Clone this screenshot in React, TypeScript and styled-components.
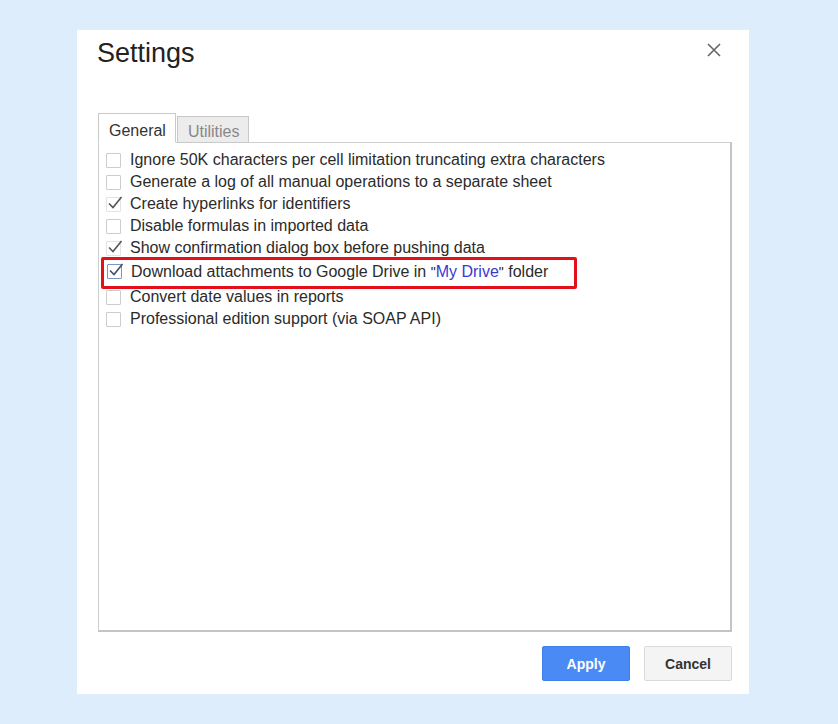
import React from "react";
import styled, { createGlobalStyle } from "styled-components";

const Global = createGlobalStyle`
  html, body { margin: 0; padding: 0; }
  body {
    background: #deedfb;
    font-family: "Liberation Sans", Arial, sans-serif;
    width: 838px;
    height: 724px;
    overflow: hidden;
  }
`;

const Page = styled.div`
  width: 838px;
  height: 724px;
  box-sizing: border-box;
  padding: 30px 89px 0 77px;
`;

const Dialog = styled.div`
  background: #ffffff;
  height: 664px;
  box-sizing: border-box;
  padding: 0 17px 0 21px;
  display: flex;
  flex-direction: column;
`;

const Header = styled.div`
  display: flex;
  justify-content: space-between;
  align-items: flex-start;
  height: 83px;
`;

const Title = styled.h1`
  margin: 8px 0 0 -1px;
  font-family: "Liberation Sans", Arial, sans-serif;
  font-weight: 400;
  font-size: 27px;
  line-height: 30px;
  color: #222;
`;

const Close = styled.button`
  border: 0;
  background: none;
  padding: 0;
  margin: 12px 10px 0 0;
  width: 16px;
  height: 16px;
  cursor: pointer;
  display: flex;
`;

const Tabs = styled.div`
  display: flex;
  align-items: flex-end;
  height: 30px;
  position: relative;
  z-index: 1;
`;

const Tab = styled.div<{ $active?: boolean }>`
  box-sizing: border-box;
  height: ${(p) => (p.$active ? "30px" : "27px")};
  padding: 0 9px 0 10px;
  border: 1px solid #c9c9c9;
  border-bottom: ${(p) => (p.$active ? "1px solid #ffffff" : "1px solid #c9c9c9")};
  background: ${(p) => (p.$active ? "#ffffff" : "#ececec")};
  color: ${(p) => (p.$active ? "#333" : "#888")};
  font-size: 16px;
  line-height: ${(p) => (p.$active ? "34px" : "29px")};
  margin-left: ${(p) => (p.$active ? "0" : "1px")};
`;

const Panel = styled.div`
  margin-top: -1px;
  height: 490px;
  box-sizing: border-box;
  border: 1px solid #cfcfcf;
  border-right: 2px solid #c4c4c4;
  border-bottom: 2px solid #c4c4c4;
  padding: 6px 0 0 7px;
  display: flex;
  flex-direction: column;
`;

const Row = styled.label<{ $highlight?: boolean }>`
  display: flex;
  align-items: center;
  gap: 9px;
  height: 22px;
  font-size: 16px;
  color: #2b2b2b;
  ${(p) =>
    p.$highlight
      ? `
    box-sizing: border-box;
    align-self: flex-start;
    height: 32px;
    margin: -2px 0 -3px -5px;
    padding: 0 26px 3px 3px;
    border: 3px solid #e3101b;
    border-radius: 2px;
    position: relative;
    z-index: 1;
    background: #fff;
  `
      : ""}
`;

const Box = styled.span<{ $checked?: boolean; $blue?: boolean }>`
  width: 15px;
  height: 15px;
  box-sizing: border-box;
  border: 1px solid ${(p) => (p.$blue ? "#7c95c4" : p.$checked ? "#e3e3e3" : "#cdcdcd")};
  border-radius: 1px;
  display: flex;
  align-items: center;
  justify-content: center;
  flex: none;
  position: relative;
`;

const Check = styled.svg`
  position: absolute;
  left: 0px;
  top: -4px;
`;

const Link = styled.span`
  color: #3a3ad0;
`;

const Quote = styled.span`
  font-size: 14px;
`;

const Footer = styled.div`
  display: flex;
  justify-content: flex-end;
  gap: 14px;
  margin-top: 14px;
`;

const Button = styled.button<{ $primary?: boolean }>`
  width: 88px;
  height: 35px;
  box-sizing: border-box;
  border-radius: 2px;
  font-family: "Liberation Sans", Arial, sans-serif;
  font-size: 14px;
  font-weight: 700;
  cursor: pointer;
  border: 1px solid ${(p) => (p.$primary ? "#3f7fe8" : "#dadada")};
  background: ${(p) => (p.$primary ? "#4a8af4" : "#f4f4f4")};
  color: ${(p) => (p.$primary ? "#ffffff" : "#333")};
`;

const CheckMark = ({ dark }: { dark?: boolean }) => (
  <Check width="17" height="17" viewBox="0 0 17 17">
    <path
      d="M2 9.5 L6 13.5 L14.5 3"
      fill="none"
      stroke={dark ? "#3d4f6e" : "#555"}
      strokeWidth="1.6"
    />
  </Check>
);

type Item = { text: React.ReactNode; checked?: boolean; highlight?: boolean };

const items: Item[] = [
  { text: "Ignore 50K characters per cell limitation truncating extra characters" },
  { text: "Generate a log of all manual operations to a separate sheet" },
  { text: "Create hyperlinks for identifiers", checked: true },
  { text: "Disable formulas in imported data" },
  { text: "Show confirmation dialog box before pushing data", checked: true },
  {
    text: (
      <span>
        Download attachments to Google Drive in <Quote>"</Quote>
        <Link>My Drive</Link>
        <Quote>"</Quote> folder
      </span>
    ),
    checked: true,
    highlight: true,
  },
  { text: "Convert date values in reports" },
  { text: "Professional edition support (via SOAP API)" },
];

export default function App() {
  return (
    <>
      <Global />
      <Page>
        <Dialog>
          <Header>
            <Title>Settings</Title>
            <Close aria-label="Close">
              <svg width="16" height="16" viewBox="0 0 16 16">
                <path d="M2 2 L14 14 M14 2 L2 14" stroke="#666" strokeWidth="1.6" />
              </svg>
            </Close>
          </Header>
          <Tabs>
            <Tab $active>General</Tab>
            <Tab>Utilities</Tab>
          </Tabs>
          <Panel>
            {items.map((it, i) => (
              <Row key={i} $highlight={it.highlight}>
                <Box $checked={it.checked} $blue={it.highlight}>
                  {it.checked && <CheckMark dark={it.highlight} />}
                </Box>
                {it.text}
              </Row>
            ))}
          </Panel>
          <Footer>
            <Button $primary>Apply</Button>
            <Button>Cancel</Button>
          </Footer>
        </Dialog>
      </Page>
    </>
  );
}
